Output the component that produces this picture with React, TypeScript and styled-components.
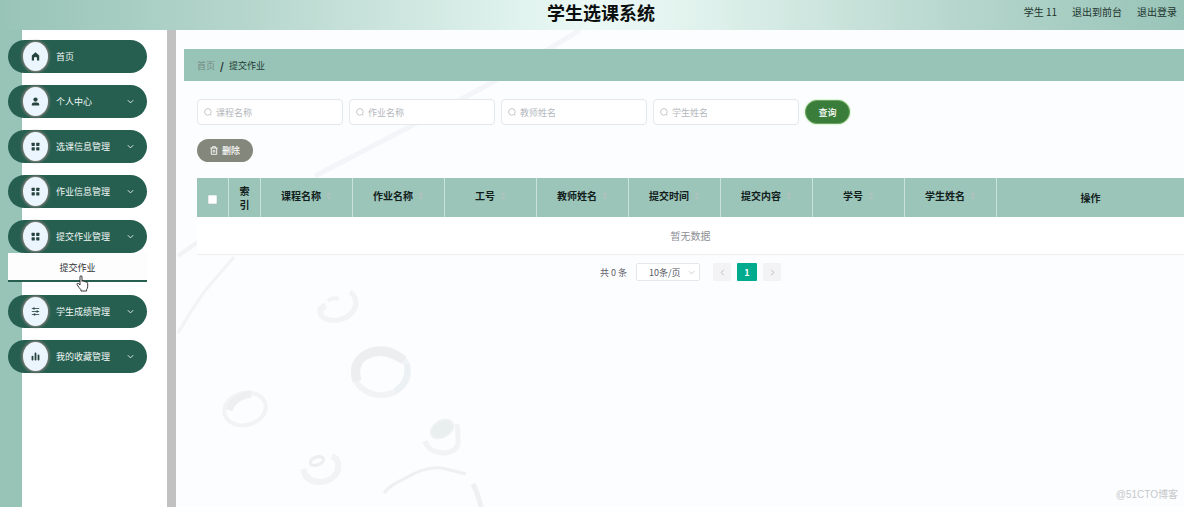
import React from 'react';
import styled, { createGlobalStyle, css } from 'styled-components';

const sage = '#98c4b7';
const pine = '#265f50';

const GlobalStyle = createGlobalStyle`
  * { box-sizing: border-box; }
  body {
    margin: 0;
    font-family: "Noto Sans CJK SC", "Liberation Sans", sans-serif;
    font-size: 9px;
    color: #333;
    background: #fff;
  }
  button, input, select { font-family: inherit; font-size: inherit; }
  a { color: inherit; text-decoration: none; }
  ul { list-style: none; margin: 0; padding: 0; }
`;

const Page = styled.div`
  min-height: 100vh;
  display: flex;
  flex-direction: column;
`;

const Header = styled.header`
  height: 30px;
  display: grid;
  grid-template-columns: 1fr auto 1fr;
  background: linear-gradient(90deg, ${sage} 0%, #b4d5cb 20%, #e2f4ef 45%, #ecf9f6 50%, #e2f3ee 58%, #b4d5cb 82%, ${sage} 100%);
`;

const Title = styled.h1`
  grid-column: 2;
  margin: 0;
  padding-left: 18px;
  font-size: 18px;
  line-height: 24px;
  font-weight: 700;
  color: #0b0f0e;
`;

const UserNav = styled.nav`
  display: flex;
  justify-content: flex-end;
  gap: 15px;
  padding-right: 7px;
  font-size: 10px;
  line-height: 23px;
  color: #22352f;
  white-space: nowrap;
`;

const Body = styled.div`
  flex: 1;
  display: flex;
`;

const Sidebar = styled.aside`
  flex: none;
  width: 176px;
  padding: 10px 20px 10px 8px;
  border-right: 9px solid #c1c1c1;
  background: linear-gradient(90deg, ${sage} 22px, #fff 22px);
`;

const Menu = styled.ul`
  display: flex;
  flex-direction: column;
  gap: 12px;
`;

const pill = css`
  display: flex;
  align-items: center;
  width: 100%;
  height: 33px;
  padding: 0 13px 0 15px;
  border: 0;
  border-radius: 17px;
  background: ${pine};
  color: #f1f7f5;
  font-size: 9px;
  line-height: 14px;
  text-align: left;
  cursor: pointer;
`;

const MenuLink = styled.a`${pill}`;
const MenuButton = styled.button`${pill}`;

const IconDisc = styled.span`
  display: flex;
  align-items: center;
  justify-content: center;
  width: 25px;
  height: 29px;
  margin-right: 8px;
  border-radius: 50%;
  background: #ebf5fd;
  box-shadow: 0 0 3px 1px #96847f;
  color: #27443f;
`;

const MenuText = styled.span`
  flex: 1;
`;

const SubMenu = styled.ul`
  position: relative;
  margin-bottom: 1px;
  background: #fdfdfd;
  border-bottom: 2px solid ${pine};
`;

const SubLink = styled.a`
  display: block;
  height: 27px;
  line-height: 30px;
  text-align: center;
  color: #333;
`;

const Pointer = styled.svg`
  position: absolute;
  left: 68px;
  top: 22px;
`;

const Main = styled.main`
  position: relative;
  flex: 1;
  min-width: 0;
  padding: 19px 0 20px 8px;
  background: #fcfdfe;
  overflow: hidden;
`;

const Backdrop = styled.svg`
  position: absolute;
  left: 0;
  top: 0;
`;

const Breadcrumb = styled.nav`
  position: relative;
  display: flex;
  align-items: center;
  gap: 5px;
  height: 32px;
  padding-left: 13px;
  background: ${sage};
  color: #1d3a33;
  a { color: #74877f; }
  b { font-size: 10px; color: #14201d; }
`;

const Content = styled.div`
  position: relative;
  padding-left: 13px;
`;

const SearchForm = styled.form`
  display: flex;
  align-items: center;
  gap: 6px;
  margin-top: 18px;
`;

const Field = styled.label`
  display: flex;
  align-items: center;
  gap: 4px;
  flex: 0 1 146px;
  min-width: 0;
  height: 26px;
  padding: 0 6px;
  border: 1px solid #e4e7ec;
  border-radius: 4px;
  background: #fff;
  color: #b9bcc2;
  svg { flex: none; }
`;

const FieldInput = styled.input`
  flex: 1;
  min-width: 0;
  padding: 0;
  border: 0;
  outline: 0;
  background: transparent;
  &::placeholder { color: #b4b7bd; opacity: 1; }
`;

const SearchButton = styled.button`
  width: 45px;
  height: 24px;
  padding: 0;
  border: 1px solid #6aa35f;
  border-radius: 12px;
  background: #3a7d3a;
  box-shadow: 0 0 2px #a5e39a;
  color: #fff;
  font-weight: 500;
`;

const DeleteButton = styled.button`
  display: flex;
  align-items: center;
  justify-content: center;
  gap: 4px;
  width: 56px;
  height: 23px;
  margin: 14px 0 16px;
  padding: 0;
  border: 0;
  border-radius: 12px;
  background: #84877b;
  color: #fff;
  font-weight: 500;
`;

const Table = styled.table`
  width: 100%;
  table-layout: fixed;
  border-collapse: separate;
  border-spacing: 0;
  background: #fff;
`;

const Col = styled.col<{ $w?: number }>`
  width: ${(p) => (p.$w ? `${p.$w}px` : 'auto')};
`;

const Th = styled.th<{ $sortable?: boolean }>`
  height: 39px;
  padding: ${(p) => (p.$sortable ? '0 0 4px' : '0 6px')};
  background: #9bc5b9;
  border-right: 1px solid #c9e2da;
  font-size: 10px;
  line-height: 14px;
  font-weight: 700;
  color: #12201c;
  &:last-child { border-right: 0; }
`;

const HeadLabel = styled.span`
  display: flex;
  align-items: center;
  justify-content: center;
  gap: 5px;
`;

const TickBox = styled.input`
  appearance: none;
  display: block;
  width: 9px;
  height: 9px;
  margin: 4px auto 0;
  border: 1px solid #e6ebe9;
  border-radius: 1px;
  background: #fff;
`;

const EmptyCell = styled.td`
  height: 38px;
  padding: 0;
  border-bottom: 1px solid #eceef0;
  text-align: center;
  font-size: 10px;
  line-height: 14px;
  color: #8d9095;
`;

const Pagination = styled.nav`
  display: flex;
  align-items: center;
  justify-content: center;
  height: 18px;
  margin-top: 8px;
  color: #5c5f66;
`;

const SizeBox = styled.span`
  position: relative;
  display: flex;
  margin: 0 13px 0 9px;
  svg { position: absolute; right: 5px; top: 6px; color: #c4c7cc; pointer-events: none; }
`;

const SizeSelect = styled.select`
  appearance: none;
  width: 64px;
  height: 18px;
  padding: 0 0 0 12px;
  border: 1px solid #e4e7ec;
  border-radius: 2px;
  background: #fff;
  color: #55585e;
`;

const PageButton = styled.button<{ $active?: boolean }>`
  display: flex;
  align-items: center;
  justify-content: center;
  width: ${(p) => (p.$active ? 20 : 18)}px;
  height: 18px;
  padding: 0;
  border: 0;
  border-radius: 1px;
  background: ${(p) => (p.$active ? '#00ab8e' : '#f3f3f5')};
  color: ${(p) => (p.$active ? '#fff' : '#b3b6bb')};
  font-weight: 700;
  & + & { margin-left: 6px; }
`;

const Watermark = styled.small`
  position: absolute;
  right: 6px;
  bottom: 4px;
  font-family: "Liberation Sans", "Noto Sans CJK SC", sans-serif;
  font-size: 10px;
  line-height: 16px;
  color: #c6c8cb;
`;

const HomeIcon = () => (
  <svg width="9" height="9" viewBox="0 0 9 9" fill="currentColor" aria-hidden="true">
    <path d="M4.5 0.3 L8.2 3.6 V8.5 H6 V6 Q6 4.9 4.5 4.9 Q3 4.9 3 6 V8.5 H0.8 V3.6 Z" />
  </svg>
);
const UserIcon = () => (
  <svg width="9" height="9" viewBox="0 0 9 9" fill="currentColor" aria-hidden="true">
    <circle cx="4.5" cy="2.6" r="2.1" />
    <path d="M0.8 8.4 V7.4 Q0.8 5.6 2.8 5.6 H6.2 Q8.2 5.6 8.2 7.4 V8.4 Z" />
  </svg>
);
const GridIcon = () => (
  <svg width="9" height="9" viewBox="0 0 9 9" fill="currentColor" aria-hidden="true">
    <rect x="0.6" y="0.8" width="3.2" height="3.2" rx="0.4" />
    <rect x="5.2" y="0.8" width="3.2" height="3.2" rx="0.4" />
    <rect x="0.6" y="5.2" width="3.2" height="3.2" rx="0.4" />
    <rect x="5.2" y="5.2" width="3.2" height="3.2" rx="0.4" />
  </svg>
);
const SlidersIcon = () => (
  <svg width="9" height="9" viewBox="0 0 9 9" fill="none" stroke="currentColor" strokeWidth="0.8" aria-hidden="true">
    <path d="M0.8 1.5 H8.2 M0.8 4.5 H8.2 M0.8 7.5 H8.2" />
    <path d="M3 0.6 V2.4 M6.2 3.6 V5.4 M3.6 6.6 V8.4" strokeWidth="1.5" />
  </svg>
);
const BarsIcon = () => (
  <svg width="9" height="9" viewBox="0 0 9 9" fill="currentColor" aria-hidden="true">
    <rect x="0.6" y="3.8" width="1.8" height="4.7" rx="0.8" />
    <rect x="3.6" y="0.6" width="1.8" height="7.9" rx="0.8" />
    <rect x="6.6" y="2.6" width="1.8" height="5.9" rx="0.8" />
  </svg>
);
const Chevron = ({ dir = 'down', size = 7 }: { dir?: 'down' | 'left' | 'right'; size?: number }) => {
  const d = { down: 'M0.8 2.2 L3.5 4.9 L6.2 2.2', left: 'M4.8 0.8 L2.2 3.5 L4.8 6.2', right: 'M2.2 0.8 L4.8 3.5 L2.2 6.2' }[dir];
  return (
    <svg width={size} height={size} viewBox="0 0 7 7" fill="none" stroke="currentColor" strokeWidth="0.9" aria-hidden="true">
      <path d={d} />
    </svg>
  );
};
const SearchIcon = () => (
  <svg width="8" height="8" viewBox="0 0 8 8" fill="none" stroke="currentColor" strokeWidth="0.8" aria-hidden="true">
    <circle cx="3.9" cy="3.9" r="3.3" />
    <path d="M6.3 6.3 L7.5 7.5" />
  </svg>
);
const TrashIcon = () => (
  <svg width="8" height="9" viewBox="0 0 8 9" fill="none" stroke="currentColor" strokeWidth="0.9" aria-hidden="true">
    <path d="M0.4 2 H7.6 M2.6 2 V0.7 H5.4 V2 M1.3 2 V8.3 H6.7 V2 M3.2 3.8 V6.6 M4.8 3.8 V6.6" />
  </svg>
);
const SortIcon = () => (
  <svg width="6" height="9" viewBox="0 0 6 9" fill="#b3c2bd" aria-hidden="true">
    <path d="M3 0.8 L5.4 3.8 H0.6 Z M3 8.2 L5.4 5.2 H0.6 Z" />
  </svg>
);
const HandPointer = () => (
  <Pointer width="13" height="17" viewBox="0 0 13 17" fill="#fff" stroke="#222" strokeWidth="0.9" strokeLinejoin="round" aria-hidden="true">
    <path d="M4 10 V2 Q4 0.8 5 0.8 Q6 0.8 6 2 V6.4 Q6 5.6 7 5.7 Q8 5.8 8 6.8 Q8.2 6.1 9 6.3 Q9.9 6.5 9.9 7.4 Q10.3 6.9 11 7.2 Q11.7 7.5 11.7 8.5 V11.5 Q11.7 13.5 10.6 14.5 V16 H5 V14.8 Q3 12.8 1.2 9.8 Q0.7 8.8 1.5 8.3 Q2.4 7.9 4 10 Z" />
  </Pointer>
);

/* Pale water drops and stems behind the content. */
const Drops = () => (
  <Backdrop width="420" height="477" viewBox="0 0 420 477" fill="none" stroke="#f1f3f4" aria-hidden="true">
    <path d="M139 146 L239 94 L330 45 L404 0" strokeWidth="5" stroke="#f4f5f8" />
    <path d="M2 226 L22 212" strokeWidth="4" />
    <path d="M2 303 Q14 282 28 262 Q45 242 58 227" strokeWidth="3" />
    <path d="M144 284 Q150 292 163 290 Q178 286 180 274 Q180 266 174 262" strokeWidth="5" />
    <path d="M145 284 Q142 278 150 276" strokeWidth="6" />
    <path d="M152 271 Q157 267 163 269" strokeWidth="4" />
    <ellipse cx="205" cy="342" rx="27" ry="23" strokeWidth="6" />
    <path d="M181 351 Q176 332 190 325 Q206 316 228 330" strokeWidth="9" stroke="#eceeef" />
    <path d="M231 334 Q234 352 219 361" strokeWidth="6" stroke="#ecf1f4" />
    <ellipse cx="69" cy="379" rx="21" ry="16" strokeWidth="4" transform="rotate(-14 69 379)" />
    <path d="M53 380 Q57 367 75 364" strokeWidth="7" stroke="#edeff0" />
    <path d="M127 439 Q130 453 146 452 Q164 448 162 433 Q161 428 156 426" strokeWidth="6" />
    <ellipse cx="141" cy="431" rx="7" ry="4" strokeWidth="3" transform="rotate(-20 141 431)" stroke="#eceeef" />
    <path d="M249 411 Q252 422 268 423 Q284 422 282 408 Q282 400 281 394" strokeWidth="5" />
    <ellipse cx="266" cy="399" rx="12" ry="8" fill="#e9eeee" stroke="#eef1f1" strokeWidth="2" transform="rotate(-30 266 399)" />
    <path d="M208 463 Q214 455 228 449 Q252 434 270 439 L290 444" strokeWidth="3" stroke="#eef0f1" />
    <path d="M297 454 Q302 464 305 477" strokeWidth="5" stroke="#eef0f1" />
  </Backdrop>
);

const menuItems = [
  { text: '个人中心', icon: <UserIcon /> },
  { text: '选课信息管理', icon: <GridIcon /> },
  { text: '作业信息管理', icon: <GridIcon /> },
  { text: '提交作业管理', icon: <GridIcon />, child: '提交作业' },
  { text: '学生成绩管理', icon: <SlidersIcon /> },
  { text: '我的收藏管理', icon: <BarsIcon /> },
];

const filters = ['课程名称', '作业名称', '教师姓名', '学生姓名'];
const columns = ['课程名称', '作业名称', '工号', '教师姓名', '提交时间', '提交内容', '学号', '学生姓名'];

export default function App() {
  return (
    <Page>
      <GlobalStyle />
      <Header>
        <Title>学生选课系统</Title>
        <UserNav aria-label="用户">
          <span>学生 11</span>
          <a href="#front">退出到前台</a>
          <a href="#logout">退出登录</a>
        </UserNav>
      </Header>
      <Body>
        <Sidebar>
          <Menu>
            <li>
              <MenuLink href="#home">
                <IconDisc><HomeIcon /></IconDisc>
                <MenuText>首页</MenuText>
              </MenuLink>
            </li>
            {menuItems.map((item) => (
              <li key={item.text}>
                <MenuButton type="button" aria-expanded={Boolean(item.child)}>
                  <IconDisc>{item.icon}</IconDisc>
                  <MenuText>{item.text}</MenuText>
                  <Chevron />
                </MenuButton>
                {item.child && (
                  <SubMenu>
                    <li>
                      <SubLink href="#submit">{item.child}</SubLink>
                      <HandPointer />
                    </li>
                  </SubMenu>
                )}
              </li>
            ))}
          </Menu>
        </Sidebar>
        <Main>
          <Drops />
          <Breadcrumb aria-label="位置">
            <a href="#home">首页</a>
            <b>/</b>
            <span>提交作业</span>
          </Breadcrumb>
          <Content>
            <SearchForm onSubmit={(e: React.FormEvent) => e.preventDefault()}>
              {filters.map((name) => (
                <Field key={name}>
                  <SearchIcon />
                  <FieldInput type="text" placeholder={name} aria-label={name} />
                </Field>
              ))}
              <SearchButton type="submit">查询</SearchButton>
            </SearchForm>
            <DeleteButton type="button"><TrashIcon />删除</DeleteButton>
            <Table>
              <colgroup>
                <Col $w={32} />
                <Col $w={32} />
                {columns.map((c) => <Col key={c} $w={92} />)}
                <Col />
              </colgroup>
              <thead>
                <tr>
                  <Th><TickBox type="checkbox" aria-label="全选" /></Th>
                  <Th>索引</Th>
                  {columns.map((c) => (
                    <Th key={c} $sortable>
                      <HeadLabel>{c}<SortIcon /></HeadLabel>
                    </Th>
                  ))}
                  <Th>操作</Th>
                </tr>
              </thead>
              <tbody>
                <tr><EmptyCell colSpan={11}>暂无数据</EmptyCell></tr>
              </tbody>
            </Table>
            <Pagination aria-label="分页">
              <span>共 0 条</span>
              <SizeBox>
                <SizeSelect aria-label="每页条数"><option>10条/页</option></SizeSelect>
                <Chevron />
              </SizeBox>
              <PageButton type="button" aria-label="上一页"><Chevron dir="left" /></PageButton>
              <PageButton type="button" $active>1</PageButton>
              <PageButton type="button" aria-label="下一页"><Chevron dir="right" /></PageButton>
            </Pagination>
          </Content>
          <Watermark>@51CTO博客</Watermark>
        </Main>
      </Body>
    </Page>
  );
}
